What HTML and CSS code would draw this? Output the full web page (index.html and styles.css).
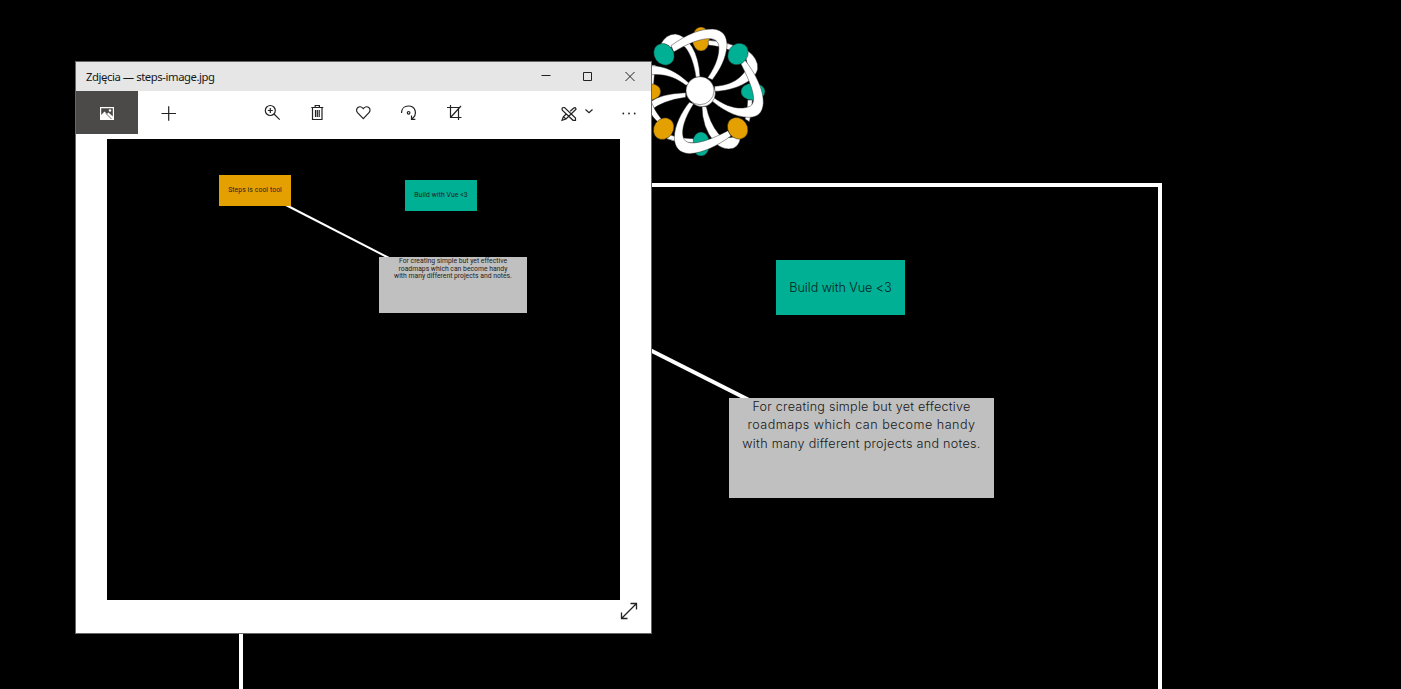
FILE: index.html
```
<!DOCTYPE html>
<html lang="pl">
<head>
<meta charset="utf-8">
<title>Steps</title>
<link rel="stylesheet" href="styles.css">
</head>
<body>
<svg class="logo" viewBox="0 0 420 450">
  <g class="accent"><ellipse class="amber" cx="183" cy="72" rx="26" ry="36"/><ellipse class="teal" cx="183" cy="387" rx="26" ry="36"/><ellipse class="teal" cx="339" cy="230" rx="36" ry="26"/><ellipse class="amber" cx="26" cy="230" rx="36" ry="26"/></g>
  <g class="petal">
    <path d="M168 187C163 145 145 98 128 92Q100 88 82 104L62 88Q78 57 106 57Q134 60 156 95Q177 130 180 185Z"/>
    <path d="M205 76Q245 77 280 91L270 106Q240 93 205 90Z"/>
    <path d="M224 214C280 210 303 187 318 165Q326 142 314 126L322 106Q356 132 353 161C347 199 280 228 224 229Z"/>
    <path d="M186 275Q186 335 222 380Q248 408 280 400Q297 391 301 371L280 366Q255 372 236 357Q208 322 199 275Z"/>
    <path d="M323 255L337 255Q337 290 328 320L315 312Q323 285 323 255Z"/>
    <path d="M137 233Q60 237 34 259V286Q65 257 137 247Z"/>
    <path d="M34 150H47Q42 185 41 207H34Z"/>
    <path d="M86 358Q115 370 160 371V384Q120 386 80 371Z"/>
    <path d="M149 206C110 169 75 153 34 152V179C80 176 110 190 138 211Z"/>
    <path d="M93 92C145 55 180 42 218 42C250 44 262 66 261 93C258 130 240 165 217 194L203 188C230 150 239 115 236 91C230 55 166 71 101 111Z"/>
    <path d="M313 133C348 177 371 225 370 264C368 294 353 307 326 307C285 307 240 281 209 251L218 245C260 278 303 286 330 274C358 258 325 190 300 141Z"/>
    <path d="M273 363C232 392 190 414 149 416C118 415 103 397 103 367C104 330 124 292 148 262L161 266C134 309 123 344 130 368C140 399 202 380 264 347Z"/>
    <path d="M34 260C44 287 58 304 71 320L60 328C49 316 41 310 34 298Z"/>
    <circle cx="186" cy="235" r="40"/><circle cx="180" cy="227" r="42"/>
  </g>
  <g class="accent"><ellipse class="teal" cx="72" cy="118" rx="29" ry="34" transform="rotate(-35 72 118)"/><ellipse class="teal" cx="294" cy="117" rx="29" ry="34" transform="rotate(35 294 117)"/><ellipse class="amber" cx="71" cy="341" rx="29" ry="34" transform="rotate(35 71 341)"/><ellipse class="amber" cx="293" cy="340" rx="29" ry="34" transform="rotate(-35 293 340)"/></g>
</svg>

<main class="board">
  <svg class="link" viewBox="0 0 915 502"><path d="M300 109L508 214"/></svg>
  <div class="node vue"><span>Build with Vue &lt;3</span></div>
  <div class="node note"><span class="l1">For creating simple but yet effective</span><span class="l2">roadmaps which can become handy</span><span class="l3">with many different projects and notes.</span></div>
</main>

<section class="window">
  <header class="titlebar">
    <span class="title">Zdjęcia — steps-image.jpg</span>
    <svg class="controls" viewBox="0 0 120 29"><path d="M10.500 13.500H19.500M52.500 10.500H60.500V18.500H52.500ZM94.500 10L103.500 19M103.500 10L94.500 19"/></svg>
  </header>
  <div class="toolbar">
    <div class="tab"><svg viewBox="0 0 14 14"><path fill="#fff" fill-rule="evenodd" d="M0 1H14V14H0ZM1.200 2.200V9L4.500 5.500L7 8L8.500 6.500L12.800 10.500V2.200Z"/><circle cx="10" cy="4.500" r="1.200" fill="#fff"/><path d="M6 7.500L11.500 13" stroke="#4c4a48" stroke-width=".8"/></svg></div>
    <svg class="tools" viewBox="138 91 513 44">
      <path d="M161.500 113.500H176M168.700 106.200V120.800"/>
      <circle cx="270.300" cy="110.500" r="5"/><path d="M267.800 110.500H272.800M270.300 108V113M274 114L279.700 119.700"/>
      <path d="M311.300 107.500H323.300M312.500 107.500V119.500H322V107.500M315.200 107V105.500H319.400V107M315.500 110V117M317.300 110V117M319.200 110V117"/>
      <path d="M363.300 118.700L357.500 112.600C354.500 109 359.500 104 363.300 108.600C367 104 372.300 109 369 112.600Z"/>
      <path d="M401.500 113C401.500 108.500 404.500 106 408.300 106C416 106 418 115 411.500 119M411.500 115.500V119.300H415.300"/><circle cx="408.600" cy="112.800" r="1.300"/>
      <path d="M447 107.500H458.500V120M450.500 105V117.500H461.500M450.500 117.500L461 106"/>
      <path d="M562 109.300Q562 107.300 564.500 107.500L575.500 118V120.300H573L562.500 110.500ZM573.500 108.200Q575.500 106.500 576 109.200L566 119L562 120.300L563.300 116.800L566.500 113.800M570.200 111.200L573.500 108.200M563.300 116.800L566 119"/>
      <path d="M585.500 109.500L589 112.800L592.500 109.500"/>
      <g class="dots"><circle cx="623.300" cy="113.500" r=".9"/><circle cx="629" cy="113.500" r=".9"/><circle cx="634.700" cy="113.500" r=".9"/></g>
    </svg>
  </div>
  <div class="picture">
    <svg class="link" viewBox="0 0 512 461"><path d="M176 64.500L282 119"/></svg>
    <div class="mini first"><span>Steps is cool tool</span></div>
    <div class="mini second"><span>Build with Vue &lt;3</span></div>
    <div class="mini third"><span>For creating simple but yet effective</span><span>roadmaps which can become handy</span><span>with many different projects and notes.</span></div>
  </div>
  <footer class="bottom"><svg viewBox="0 0 18 18"><path d="M1.500 16.500L16.500 1.500M10.500 1.500H16.500V7.500M1.500 10.500V16.500H7.500"/></svg></footer>
</section>
</body>
</html>
```
FILE: styles.css
```
* { box-sizing: border-box; }
body { margin: 0; width: 1401px; height: 689px; overflow: hidden; position: relative; background: #000; }
svg { display: block; fill: none; }
span { white-space: nowrap; }

.logo { position: absolute; left: 640px; top: 15px; width: 140px; height: 150px; }
.petal { fill: #fff; stroke: #222; stroke-width: 1.400; }
.accent { stroke: #222; stroke-width: 1.400; }
.teal { fill: #00b094; }
.amber { fill: #e4a000; }

.board { position: absolute; left: 239px; top: 183px; width: 923px; height: 520px; border: 4px solid #fff; }
.link { position: absolute; left: 0; top: 0; width: 915px; height: 502px; stroke: #fff; stroke-width: 4; }
.node { position: absolute; display: flex; flex-direction: column; align-items: center; color: #171717; font: 300 12.600px/18.300px Inter, sans-serif; }
.vue { left: 533px; top: 73px; width: 129px; height: 55px; padding-top: 1px; justify-content: center; background: #00b094; color: #06231e; letter-spacing: -.05px; }
.note { left: 486px; top: 211px; width: 265px; height: 100px; background: #c0c0c0; }
.l1 { letter-spacing: .24px; }
.l2 { letter-spacing: .48px; }
.l3 { letter-spacing: .28px; }

.window { position: absolute; left: 75px; top: 61px; width: 577px; height: 573px; display: flex; flex-direction: column; background: #fff; border: 1px solid #666; }
.titlebar { height: 29px; display: flex; align-items: center; justify-content: space-between; padding-left: 10px; background: #e6e6e6; }
.title { color: #171717; font: 11.300px/28px "Noto Sans", sans-serif; letter-spacing: -.43px; }
.controls { width: 120px; height: 29px; stroke: #222; }
.toolbar { height: 43px; display: flex; }
.tab { width: 62px; flex: none; display: flex; align-items: center; justify-content: center; background: #4c4a48; }
.tab svg { width: 14px; height: 14px; }
.tools { width: 513px; height: 44px; flex: none; stroke: #222; stroke-width: 1.200; }
.dots { fill: #222; stroke: none; }
.picture { position: relative; width: 513px; height: 461px; margin: 5px 0 0 31px; background: #000; }
.picture .link { width: 512px; height: 461px; stroke-width: 2; }
.mini { position: absolute; display: flex; flex-direction: column; align-items: center; color: #222; font: 6.800px/7.700px Roboto, sans-serif; }
.first, .second { width: 72px; height: 31px; padding-top: 1px; justify-content: center; letter-spacing: .1px; }
.first { left: 112px; top: 36px; background: #e4a000; }
.second { left: 298px; top: 41px; background: #00b094; }
.third { left: 272px; top: 118px; width: 148px; height: 56px; padding-top: 1px; background: #c0c0c0; }
.bottom { flex: 1; display: flex; justify-content: flex-end; padding: 2px 13px 0 0; }
.bottom svg { width: 18px; height: 18px; stroke: #222; stroke-width: 1.300; }
```
